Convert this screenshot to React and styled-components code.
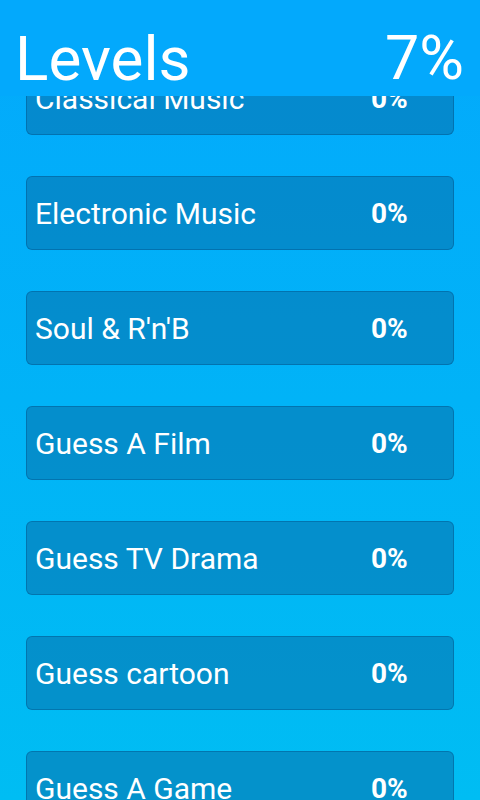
import styled, { createGlobalStyle } from "styled-components"

const levels = [
    { name: "Classical Music", percent: 0 },
    { name: "Electronic Music", percent: 0 },
    { name: "Soul & R'n'B", percent: 0 },
    { name: "Guess A Film", percent: 0 },
    { name: "Guess TV Drama", percent: 0 },
    { name: "Guess cartoon", percent: 0 },
    { name: "Guess A Game", percent: 0 },
]

const App = () => {
    return (
        <Screen>
            <GlobalStyle />
            <Header>
                <Title>Levels</Title>
                <Total>7%</Total>
            </Header>
            <Scroller>
                <List>
                    {levels.map((level) => (
                        <LevelCard key={level.name}>
                            <LevelName>{level.name}</LevelName>
                            <LevelPercent>{level.percent}%</LevelPercent>
                        </LevelCard>
                    ))}
                </List>
            </Scroller>
        </Screen>
    )
}

const GlobalStyle = createGlobalStyle`
    html, body {
        margin: 0;
        padding: 0;
        height: 100%;
    }
    body {
        font-family: Roboto, "Noto Sans", sans-serif;
        overflow: hidden;
    }
`;

const Screen = styled.div`
    width: 480px;
    height: 800px;
    display: flex;
    flex-direction: column;
    overflow: hidden;
    background: linear-gradient(180deg, #03a9fc 0%, #01b3f7 50%, #00bdf3 100%);
`;

const Header = styled.div`
    height: 96px;
    flex-shrink: 0;
    display: flex;
    align-items: center;
    justify-content: space-between;
    padding: 0 16px 0 15px;
    background-color: #03a9fc;
    position: relative;
    z-index: 1;
    color: #fff;
`;

const Title = styled.div`
    font-size: 62px;
    font-weight: 400;
    line-height: 1;
    margin-top: 21px;
`;

const Total = styled.div`
    font-size: 61px;
    font-weight: 400;
    line-height: 1;
    margin-top: 21px;
`;

const Scroller = styled.div`
    flex: 1;
    overflow: hidden;
`;

const List = styled.div`
    display: flex;
    flex-direction: column;
    gap: 41px;
    padding: 0 26px 0 26px;
    margin-top: -35px;
`;

const LevelCard = styled.div`
    height: 72px;
    flex-shrink: 0;
    display: flex;
    align-items: center;
    padding-left: 8px;
    border-radius: 6px;
    border: 1px solid rgba(0, 70, 120, 0.35);
    background-color: rgba(8, 112, 170, 0.55);
    color: #fff;
`;

const LevelName = styled.div`
    flex: 1;
    font-size: 30px;
    font-weight: 400;
`;

const LevelPercent = styled.div`
    width: 82px;
    font-size: 28px;
    font-weight: 700;
`;

export default App;
